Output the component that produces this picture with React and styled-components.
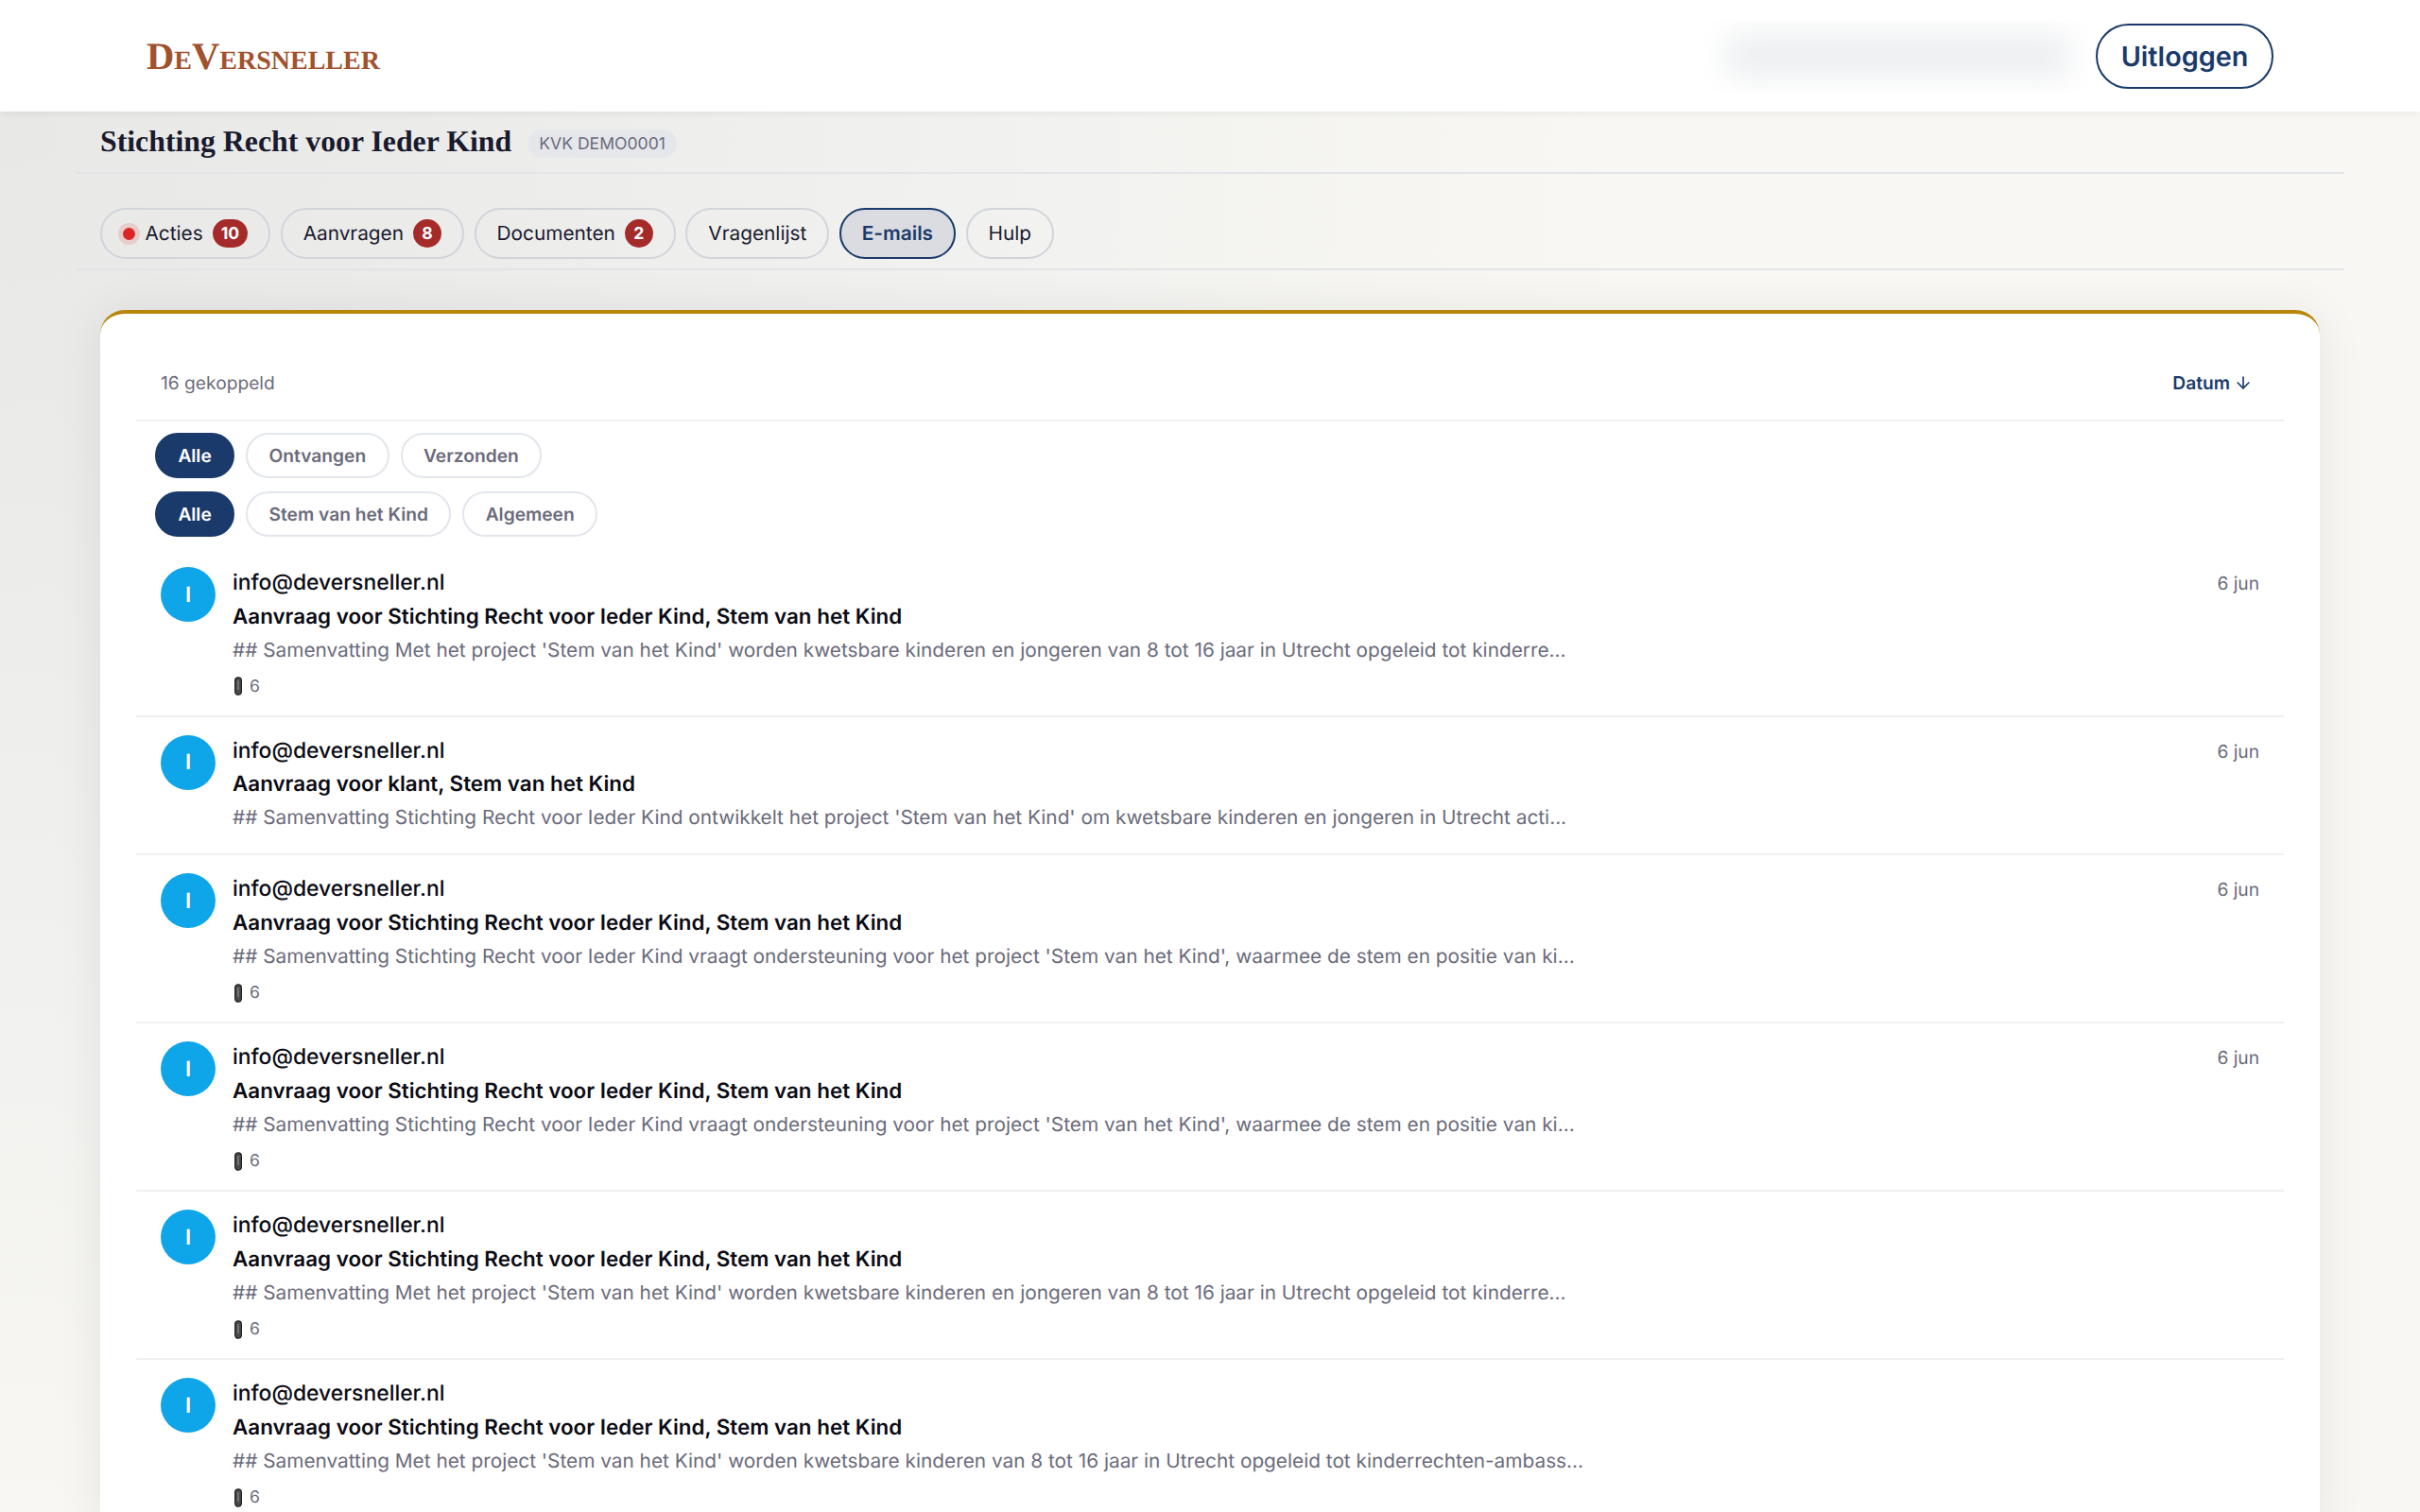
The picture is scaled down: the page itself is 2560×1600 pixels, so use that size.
import React from "react";
import styled, { createGlobalStyle } from "styled-components";
import { ArrowDown } from "lucide-react";

const Global = createGlobalStyle`
  html, body { margin: 0; padding: 0; height: 100%; overflow: hidden; }
  body {
    font-family: Inter, "Liberation Sans", sans-serif;
    text-rendering: geometricPrecision;
    background: radial-gradient(ellipse 1700px 1500px at 0 118px, #e8e8e7 0%, #ebebea 25%, #f1f1ef 60%, #f8f7f3 100%) #f8f7f3;
  }
`;

const Header = styled.header`
  height: 118px;
  background: #fff;
  box-shadow: 0 2px 8px rgba(0,0,0,.06);
  display: flex;
  align-items: center;
  padding: 0 155px 0 155px;
  position: relative;
`;
const Logo = styled.div`
  font-family: "Liberation Serif", serif;
  font-weight: 700;
  font-variant: small-caps;
  font-size: 40.6px;
  color: #a0522d;
`;
const HeaderRight = styled.div`
  margin-left: auto;
  display: flex;
  align-items: center;
  gap: 2px;
`;
const BlurBox = styled.div`
  width: 415px;
  height: 75px;
  overflow: hidden;
  display: flex;
  align-items: center;
  justify-content: center;
`;
const BlurBlob = styled.div`
  width: 360px;
  height: 46px;
  background: #eceef0;
  filter: blur(16px);
`;
const Logout = styled.button`
  width: 188px;
  height: 69px;
  border: 2.4px solid #1a3a6b;
  border-radius: 35px;
  background: #fff;
  color: #1a3a6b;
  font: 600 28.8px Inter, sans-serif;
  text-rendering: geometricPrecision;
`;
const Main = styled.main`
  padding: 0 80px;
`;
const TitleBar = styled.div`
  height: 66px;
  display: flex;
  align-items: center;
  gap: 17px;
  padding: 0 0 1px 26px;
  border-bottom: 2px solid #e2e4e8;
  box-sizing: border-box;
`;
const Title = styled.h1`
  margin: 0;
  font-family: "Liberation Serif", serif;
  font-weight: 700;
  font-size: 31.8px;
  color: #1a1a2e;
`;
const Kvk = styled.span`
  background: #e5e7eb;
  color: #6b6b7b;
  font-size: 17.6px;
  height: 30px;
  line-height: 31px;
  padding: 0 12px;
  border-radius: 15px;
  margin-top: 4px;
`;
const Tabs = styled.nav`
  height: 102px;
  display: flex;
  align-items: flex-start;
  gap: 10.5px;
  padding: 36px 0 0 26px;
  border-bottom: 2px solid #e2e4e8;
  box-sizing: border-box;
`;
const Tab = styled.div`
  height: 54px;
  box-sizing: border-box;
  display: flex;
  align-items: center;
  gap: 10px;
  padding: 0 22px 0 ${p => p.$pl || 22}px;
  border-radius: 27px;
  border: 2px solid ${p => (p.$active ? "#1a3a6b" : "#d1d5db")};
  background: ${p => (p.$active ? "#dadce1" : "transparent")};
  color: ${p => (p.$active ? "#1a3a6b" : "#1a1a2e")};
  font-size: 20.8px;
  font-weight: ${p => (p.$active ? 600 : 400)};
`;
const Dot = styled.span`
  width: 13px;
  height: 13px;
  border-radius: 50%;
  background: #dc2626;
  box-shadow: 0 0 0 5px rgba(220,38,38,.15);
  margin-right: 1px;
`;
const Count = styled.span`
  min-width: 30px;
  height: 30px;
  padding: 0 9px;
  box-sizing: border-box;
  border-radius: 15px;
  background: #a52a2a;
  color: #fff;
  font-size: 17.6px;
  font-weight: 700;
  display: flex;
  align-items: center;
  justify-content: center;
`;
const Card = styled.section`
  margin: 42px 26px 0;
  background: #fff;
  border-top: 4px solid #b8860b;
  border-radius: 26px 26px 0 0;
  box-shadow: 0 4px 50px rgba(0,0,0,.08);
  padding: 0 38px;
`;
const CardHead = styled.div`
  height: 114px;
  display: flex;
  align-items: center;
  justify-content: space-between;
  padding: 33px 33px 0 26px;
  border-bottom: 2px solid #f0f0f2;
  box-sizing: border-box;
  font-size: 19.2px;
  color: #6b6b7b;
`;
const Sort = styled.span`
  color: #1a3a6b;
  font-weight: 600;
  font-size: 19.2px;
  display: flex;
  align-items: center;
  gap: 4px;
`;
const FilterRow = styled.div`
  display: flex;
  gap: 12px;
  padding-left: 20px;
  margin-top: ${p => p.$mt}px;
`;
const Filter = styled.div`
  height: 48px;
  box-sizing: border-box;
  padding: 0 22.4px;
  display: flex;
  align-items: center;
  border-radius: 24px;
  border: 2px solid ${p => (p.$active ? "#1a3a6b" : "#e2e6ec")};
  background: ${p => (p.$active ? "#1a3a6b" : "#fff")};
  color: ${p => (p.$active ? "#fff" : "#6b6b7b")};
  font-size: 19.2px;
  font-weight: 600;
`;
const Rows = styled.div`
  margin-top: 13px;
`;
const Row = styled.article`
  display: flex;
  gap: 18px;
  padding: 19px 26px 19.4px;
  border-bottom: 2px solid #f0f0f2;
`;
const Avatar = styled.div`
  width: 58px;
  height: 58px;
  flex: none;
  border-radius: 50%;
  background: #0ea5e9;
  color: #fff;
  display: flex;
  align-items: center;
  justify-content: center;
  font-size: 22.4px;
  font-weight: 600;
`;
const Body = styled.div`
  flex: 1;
  min-width: 0;
`;
const Sender = styled.div`
  font-size: 22.9px;
  font-weight: 500;
  line-height: 33.5px;
  color: #0b0b14;
`;
const Subject = styled.div`
  font-size: 22.4px;
  font-weight: 600;
  line-height: 38px;
  color: #0b0b14;
`;
const Preview = styled.div`
  font-size: 20.8px;
  line-height: 34.5px;
  color: #6b6b7b;
`;
const Attach = styled.div`
  display: flex;
  align-items: center;
  gap: 6px;
  height: 31.6px;
  padding-top: 9px;
  box-sizing: border-box;
  font-size: 17.6px;
  color: #6b6b7b;
`;
const DateText = styled.div`
  font-size: 19.2px;
  color: #6b6b7b;
  line-height: 34px;
  flex: none;
`;

const Clip = () => (
  <svg width="12" height="20" viewBox="0 0 12 20">
    <rect x="2.6" y="0.8" width="6.8" height="18.4" rx="3.4" fill="#4a4a4a" stroke="#222" strokeWidth="1.2" />
    <path d="M6 4v10" stroke="#999" strokeWidth="1" />
  </svg>
);

const s1 = "Aanvraag voor Stichting Recht voor Ieder Kind, Stem van het Kind";
const p1 = "## Samenvatting Met het project 'Stem van het Kind' worden kwetsbare kinderen en jongeren van 8 tot 16 jaar in Utrecht opgeleid tot kinderre...";
const p2 = "## Samenvatting Stichting Recht voor Ieder Kind ontwikkelt het project 'Stem van het Kind' om kwetsbare kinderen en jongeren in Utrecht acti...";
const p3 = "## Samenvatting Stichting Recht voor Ieder Kind vraagt ondersteuning voor het project 'Stem van het Kind', waarmee de stem en positie van ki...";
const p4 = "## Samenvatting Met het project 'Stem van het Kind' worden kwetsbare kinderen van 8 tot 16 jaar in Utrecht opgeleid tot kinderrechten-ambass...";

const emails = [
  { subject: s1, preview: p1, attach: 6, date: "6 jun" },
  { subject: "Aanvraag voor klant, Stem van het Kind", preview: p2, date: "6 jun" },
  { subject: s1, preview: p3, attach: 6, date: "6 jun" },
  { subject: s1, preview: p3, attach: 6, date: "6 jun" },
  { subject: s1, preview: p1, attach: 6 },
  { subject: s1, preview: p4, attach: 6 },
];

export default function App() {
  return (
    <>
      <Global />
      <Header>
        <Logo>DeVersneller</Logo>
        <HeaderRight>
          <BlurBox><BlurBlob /></BlurBox>
          <Logout>Uitloggen</Logout>
        </HeaderRight>
      </Header>
      <Main>
        <TitleBar>
          <Title>Stichting Recht voor Ieder Kind</Title>
          <Kvk>KVK DEMO0001</Kvk>
        </TitleBar>
        <Tabs>
          <Tab $pl={21.5}><Dot />Acties<Count>10</Count></Tab>
          <Tab>Aanvragen<Count>8</Count></Tab>
          <Tab>Documenten<Count>2</Count></Tab>
          <Tab>Vragenlijst</Tab>
          <Tab $active>E-mails</Tab>
          <Tab>Hulp</Tab>
        </Tabs>
        <Card>
          <CardHead>
            <span>16 gekoppeld</span>
            <Sort>Datum <ArrowDown size={20} strokeWidth={2} /></Sort>
          </CardHead>
          <FilterRow $mt={12}>
            <Filter $active>Alle</Filter>
            <Filter>Ontvangen</Filter>
            <Filter>Verzonden</Filter>
          </FilterRow>
          <FilterRow $mt={14}>
            <Filter $active>Alle</Filter>
            <Filter>Stem van het Kind</Filter>
            <Filter>Algemeen</Filter>
          </FilterRow>
          <Rows>
            {emails.map((e, i) => (
              <Row key={i}>
                <Avatar>I</Avatar>
                <Body>
                  <Sender>info@deversneller.nl</Sender>
                  <Subject>{e.subject}</Subject>
                  <Preview>{e.preview}</Preview>
                  {e.attach && <Attach><Clip />{e.attach}</Attach>}
                </Body>
                {e.date && <DateText>{e.date}</DateText>}
              </Row>
            ))}
          </Rows>
        </Card>
      </Main>
    </>
  );
}
